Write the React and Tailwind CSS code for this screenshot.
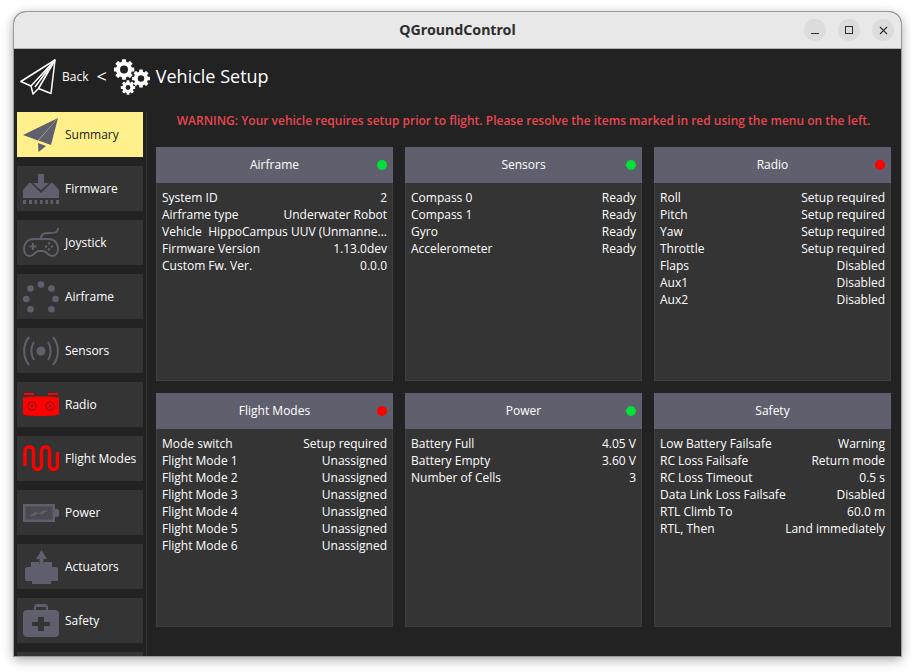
import React from "react";
import { X } from "lucide-react";

const GRAY = "#5f5f6d";

// ---------- icons ----------

const PlaneOutline = () => (
  <svg width="36" height="36" viewBox="0 0 36 36" fill="none" stroke="white" strokeWidth="1.5" strokeLinejoin="round">
    <path d="M0.8 22.5 35 1 31 34.5 18.5 29.5 13 35 11 27Z" />
    <path d="M35 1 11 27M35 1 18.5 29.5M35 1 15 28" />
  </svg>
);

const Gear = ({ cx, cy, r, hole, teeth = 8 }) => {
  const items = [];
  for (let i = 0; i < teeth; i++) {
    items.push(
      <rect
        key={i}
        x={cx - r * 0.26}
        y={cy - r * 1.28}
        width={r * 0.52}
        height={r * 0.6}
        rx={r * 0.08}
        transform={`rotate(${(i * 360) / teeth} ${cx} ${cy})`}
      />
    );
  }
  return (
    <g fill="white">
      {items}
      <path fillRule="evenodd" d={`M${cx - r} ${cy}a${r} ${r} 0 1 0 ${2 * r} 0a${r} ${r} 0 1 0 ${-2 * r} 0ZM${cx - hole} ${cy}a${hole} ${hole} 0 1 1 ${2 * hole} 0a${hole} ${hole} 0 1 1 ${-2 * hole} 0Z`} />
    </g>
  );
};

const Gears = () => (
  <svg width="36" height="36" viewBox="0 0 36 36">
    <Gear cx={10} cy={10.5} r={8} hole={4} />
    <Gear cx={27} cy={19.5} r={7} hole={3.2} />
    <Gear cx={14} cy={28.5} r={5.6} hole={2.4} />
  </svg>
);

const SummaryIcon = () => (
  <svg width="36" height="34" viewBox="0 0 36 34" fill={GRAY}>
    <path d="M0 17 35 0 15 22.5Z" />
    <path d="M35 0 28 27 15.5 22.5Z" />
    <path d="M15 25 23 28 15.5 34Z" />
  </svg>
);

const FirmwareIcon = () => (
  <svg width="36" height="30" viewBox="0 0 36 30" fill={GRAY}>
    <path d="M15 0H21V9H26L18 16.5 10 9H15Z" />
    <path d="M6 9H8L18 19 28 9H30L36 16V24H0V16Z" />
    <path d="M0 26H3V30H0ZM6 26H9V30H6ZM11.5 26H14V30H11.5ZM17 26H19.5V30H17ZM22.5 26H25V30H22.5ZM27.5 26H30V30H27.5ZM33 26H36V30H33Z" />
  </svg>
);

const JoystickIcon = () => (
  <svg width="36" height="30" viewBox="0 0 36 30" fill="none" stroke={GRAY} strokeWidth="2">
    <path d="M35 0c0 4-2 5-8 5-7 0-9 1-9 6" />
    <path d="M10 11H26C32 11 35 16 35 21 35 26 32 28 29 28 25 28 24 23 20 23H16C12 23 11 28 7 28 4 28 1 26 1 21 1 16 4 11 10 11Z" />
    <path d="M10 15V22M6.5 18.5H13.5" strokeWidth="2" />
    <g fill={GRAY} stroke="none">
      <circle cx="26" cy="15.5" r="1.2" />
      <circle cx="26" cy="21.5" r="1.2" />
      <circle cx="23" cy="18.5" r="1.2" />
      <circle cx="29" cy="18.5" r="1.2" />
    </g>
  </svg>
);

const AirframeIcon = () => (
  <svg width="36" height="32" viewBox="0 0 36 32" fill={GRAY}>
    <circle cx="18" cy="3.5" r="3.3" />
    <circle cx="7.5" cy="7.5" r="3.3" />
    <circle cx="28.5" cy="7.5" r="3.3" />
    <circle cx="3.3" cy="18" r="3.3" />
    <circle cx="32.5" cy="18" r="3.3" />
    <circle cx="7.5" cy="28.3" r="3.3" />
    <circle cx="28.5" cy="28.3" r="3.3" />
  </svg>
);

const SensorsIcon = () => (
  <svg width="36" height="30" viewBox="0 0 36 30" fill="none" stroke={GRAY} strokeWidth="2">
    <circle cx="18" cy="15" r="4.5" fill={GRAY} stroke="none" />
    <path d="M11 6C7.5 11 7.5 19 11 24M25 6C28.5 11 28.5 19 25 24" />
    <path d="M6 1C-0.5 9-0.5 21 6 29M30 1C36.5 9 36.5 21 30 29" />
  </svg>
);

const RadioIcon = () => (
  <svg width="36" height="24" viewBox="0 0 36 24">
    <path d="M1 0H11V2H1ZM25 0H35V2H25Z" fill="#ff0000" />
    <path d="M0 4.5C6 3 30 3 36 4.5V21.5C30 23.5 6 23.5 0 21.5Z" fill="#ff0000" />
    <circle cx="9" cy="13" r="4.5" fill="#7a1515" />
    <circle cx="9" cy="13" r="3.6" fill="#ff0000" />
    <circle cx="9" cy="13" r="1.3" fill="#7a1515" />
    <circle cx="27" cy="13" r="4.5" fill="#7a1515" />
    <circle cx="27" cy="13" r="3.6" fill="#ff0000" />
    <circle cx="27" cy="13" r="1.3" fill="#7a1515" />
  </svg>
);

const FlightModesIcon = () => (
  <svg width="36" height="28" viewBox="0 0 36 28" fill="none" stroke="#ff0000" strokeWidth="3.4">
    <path d="M2 21V6C2 0.5 10.5 0.5 10.5 6V20C10.5 26 18.5 26 18.5 20V6C18.5 0.5 26.5 0.5 26.5 6V20C26.5 26 34.5 26 34.5 20V7" />
  </svg>
);

const PowerIcon = () => (
  <svg width="36" height="18" viewBox="0 0 36 18">
    <rect x="1.2" y="1.2" width="29.6" height="15.6" fill="#4a4a50" stroke={GRAY} strokeWidth="2.4" />
    <path d="M32 5H34C35.5 5 36 6 36 7V11C36 12 35.5 13 34 13H32Z" fill={GRAY} />
    <path d="M6 12 13 7.5 15.5 10 20 6.5 25 6.5 18.5 10.5 15.5 9.5 10 12Z" fill={GRAY} />
  </svg>
);

const ActuatorsIcon = () => (
  <svg width="33" height="34" viewBox="0 0 33 34" fill={GRAY}>
    <path d="M16.5 0 22 9H18.5V14H14.5V9H11Z" />
    <path d="M6 12H14V14H19V12H27V17C30 17 33 17 33 19V30C33 31 32 31 30 31H26V34H7V31H3C1 31 0 31 0 30V19C0 17 3 17 6 17Z" />
  </svg>
);

const SafetyIcon = () => (
  <svg width="36" height="33" viewBox="0 0 36 33" fill="none">
    <path fillRule="evenodd" d="M11 6V3C11 1 12.5 0 14 0H22C23.5 0 25 1 25 3V6H32C34.5 6 36 7.5 36 10V29C36 31.5 34.5 33 32 33H4C1.5 33 0 31.5 0 29V10C0 7.5 1.5 6 4 6ZM13 6H23V3H13ZM15 13V18H9V22H15V27H21V22H27V18H21V13Z" fill={GRAY} />
  </svg>
);

// ---------- data ----------

const menu = [
  { name: "Summary", icon: <SummaryIcon />, active: true },
  { name: "Firmware", icon: <FirmwareIcon /> },
  { name: "Joystick", icon: <JoystickIcon /> },
  { name: "Airframe", icon: <AirframeIcon /> },
  { name: "Sensors", icon: <SensorsIcon /> },
  { name: "Radio", icon: <RadioIcon /> },
  { name: "Flight Modes", icon: <FlightModesIcon /> },
  { name: "Power", icon: <PowerIcon /> },
  { name: "Actuators", icon: <ActuatorsIcon /> },
  { name: "Safety", icon: <SafetyIcon /> },
  { name: "", icon: null },
];

const cards = [
  {
    title: "Airframe",
    dot: "bg-[#00e03a]",
    rows: [
      ["System ID", "2"],
      ["Airframe type", "Underwater Robot"],
      ["Vehicle", "HippoCampus UUV (Unmanne..."],
      ["Firmware Version", "1.13.0dev"],
      ["Custom Fw. Ver.", "0.0.0"],
    ],
  },
  {
    title: "Sensors",
    dot: "bg-[#00e03a]",
    rows: [
      ["Compass 0", "Ready"],
      ["Compass 1", "Ready"],
      ["Gyro", "Ready"],
      ["Accelerometer", "Ready"],
    ],
  },
  {
    title: "Radio",
    dot: "bg-[#ff0000]",
    rows: [
      ["Roll", "Setup required"],
      ["Pitch", "Setup required"],
      ["Yaw", "Setup required"],
      ["Throttle", "Setup required"],
      ["Flaps", "Disabled"],
      ["Aux1", "Disabled"],
      ["Aux2", "Disabled"],
    ],
  },
  {
    title: "Flight Modes",
    dot: "bg-[#ff0000]",
    rows: [
      ["Mode switch", "Setup required"],
      ["Flight Mode 1", "Unassigned"],
      ["Flight Mode 2", "Unassigned"],
      ["Flight Mode 3", "Unassigned"],
      ["Flight Mode 4", "Unassigned"],
      ["Flight Mode 5", "Unassigned"],
      ["Flight Mode 6", "Unassigned"],
    ],
  },
  {
    title: "Power",
    dot: "bg-[#00e03a]",
    rows: [
      ["Battery Full", "4.05 V"],
      ["Battery Empty", "3.60 V"],
      ["Number of Cells", "3"],
    ],
  },
  {
    title: "Safety",
    rows: [
      ["Low Battery Failsafe", "Warning"],
      ["RC Loss Failsafe", "Return mode"],
      ["RC Loss Timeout", "0.5 s"],
      ["Data Link Loss Failsafe", "Disabled"],
      ["RTL Climb To", "60.0 m"],
      ["RTL, Then", "Land immediately"],
    ],
  },
];

// ---------- parts ----------

const WinButton = ({ children }) => (
  <div className="w-[22px] h-[22px] rounded-full bg-[#dcdcdc] flex items-center justify-center text-[#2e2e2e]">
    {children}
  </div>
);

const MenuItem = ({ item }) => (
  <div
    className={`h-[45px] w-[126px] shrink-0 flex items-center pl-[6px] gap-[6px] text-[12px] ${
      item.active ? "bg-[#fff08c] text-[#1a1a1a]" : "bg-[#343434] text-white"
    }`}
  >
    <div className="w-[36px] flex justify-center shrink-0">{item.icon}</div>
    <span className="whitespace-nowrap">{item.name}</span>
  </div>
);

const Card = ({ card }) => (
  <div className="bg-[#343434] border border-[#3f3f3f] flex flex-col">
    <div className="relative h-[36px] -m-px mb-0 bg-[#5f5f6d] flex items-center justify-center text-[12px] text-white">
      {card.title}
      {card.dot && (
        <span className={`absolute right-[6px] top-[13px] w-[10px] h-[10px] rounded-full ${card.dot}`} />
      )}
    </div>
    <div className="px-[5px] pt-[6px] text-[12px] leading-[17px] text-white">
      {card.rows.map(([k, v]) => (
        <div key={k} className="flex justify-between gap-[6px] whitespace-nowrap">
          <span>{k}</span>
          <span>{v}</span>
        </div>
      ))}
    </div>
  </div>
);

export default function App() {
  return (
    <div className="w-[915px] h-[672px] bg-white overflow-hidden pl-[14px] pt-[12px] font-['Open_Sans',sans-serif]">
      <div className="w-[887px] h-[644px] flex flex-col rounded-t-[12px] overflow-hidden bg-[#222222] shadow-[0_0_0_1px_#9a9a9a,0_3px_12px_rgba(0,0,0,0.4)]">
        {/* title bar */}
        <div className="relative h-[37px] shrink-0 bg-[#e8e8e8] border-b border-[#b5b5b5] flex items-center justify-center">
          <span className="font-['Noto_Sans',sans-serif] font-bold text-[14.2px] text-[#2e2e2e]">QGroundControl</span>
          <div className="absolute right-[7px] top-[7px] flex gap-[12px]">
            <WinButton><div className="w-[8px] h-[1px] bg-[#2e2e2e] translate-y-[3px]" /></WinButton>
            <WinButton><div className="w-[8px] h-[8px] border border-[#2e2e2e]" /></WinButton>
            <WinButton><X size={13} strokeWidth={2} /></WinButton>
          </div>
        </div>

        {/* toolbar */}
        <div className="h-[63px] shrink-0 flex items-center pl-[6px] pb-[7px] text-white">
          <PlaneOutline />
          <span className="ml-[6px] text-[12px]">Back</span>
          <span className="ml-[8px] text-[18px] -translate-y-[1px]">&lt;</span>
          <div className="ml-[7px]"><Gears /></div>
          <span className="ml-[6px] text-[18px] -translate-y-[1px]">Vehicle Setup</span>
        </div>

        {/* body */}
        <div className="flex flex-1 min-h-0">
          <div className="w-[133px] shrink-0 pl-[3px] flex flex-col gap-[9px] overflow-hidden border-r border-[#333333]">
            {menu.map((m, i) => (
              <MenuItem key={i} item={m} />
            ))}
          </div>
          <div className="flex-1 pl-[9px] pr-[10px] flex flex-col">
            <div className="h-[35px] flex items-start justify-center text-[12px] font-semibold text-[#e8474f] leading-[18px]">
              WARNING: Your vehicle requires setup prior to flight. Please resolve the items marked in red using the menu on the left.
            </div>
            <div className="grid grid-cols-3 gap-x-[12px] gap-y-[12px] grid-rows-[234px_234px]">
              {cards.map((c) => (
                <Card key={c.title} card={c} />
              ))}
            </div>
          </div>
        </div>
      </div>
    </div>
  );
}
